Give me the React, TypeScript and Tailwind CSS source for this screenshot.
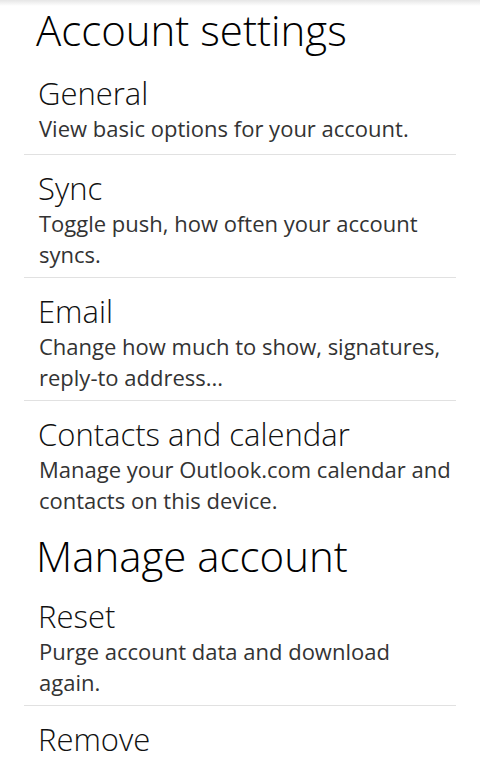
import React from "react";

type Item = { title: string; desc: string[] };

const accountItems: Item[] = [
  { title: "General", desc: ["View basic options for your account."] },
  { title: "Sync", desc: ["Toggle push, how often your account", "syncs."] },
  { title: "Email", desc: ["Change how much to show, signatures,", "reply-to address..."] },
  { title: "Contacts and calendar", desc: ["Manage your Outlook.com calendar and", "contacts on this device."] },
];

const manageItems: Item[] = [
  { title: "Reset", desc: ["Purge account data and download", "again."] },
  { title: "Remove", desc: [] },
];

function Row({ item, border, pb }: { item: Item; border: boolean; pb: string }) {
  return (
    <div className={(border ? "border-t border-[#e1e1e1] " : "") + "pt-[14px] " + pb}>
      <div className="pl-[14px] text-[31px] leading-[38px] font-light text-[#111]">{item.title}</div>
      <div className="mt-[1px]">
        {item.desc.map((d) => (
          <div key={d} className="pl-[15px] text-[22px] leading-[31px] text-[#333]">
            {d}
          </div>
        ))}
      </div>
    </div>
  );
}

export default function App() {
  return (
    <div
      className="relative min-h-[761px] w-[480px] overflow-hidden bg-white"
      style={{ fontFamily: '"Open Sans", "Noto Sans", sans-serif' }}
    >
      <div className="pointer-events-none absolute inset-x-0 top-0 h-[6px] bg-gradient-to-b from-[#e6e6e6] to-white" />
      <div className="mx-6">
        <h1 className="pl-[12px] pt-[4px] text-[42px] leading-[52px] font-light text-black">Account settings</h1>
        <div className="mt-[4px]">
          {accountItems.map((it, i) => (
            <Row key={it.title} item={it} border={i !== 0} pb={i === 0 ? "pb-[10px]" : "pb-[7px]"} />
          ))}
        </div>
        <h2 className="pl-[12px] pt-[7px] text-[42px] leading-[52px] font-light text-black">Manage account</h2>
        <div className="mt-[1px]">
          {manageItems.map((it, i) => (
            <Row key={it.title} item={it} border={i !== 0} pb="pb-[7px]" />
          ))}
        </div>
      </div>
    </div>
  );
}
